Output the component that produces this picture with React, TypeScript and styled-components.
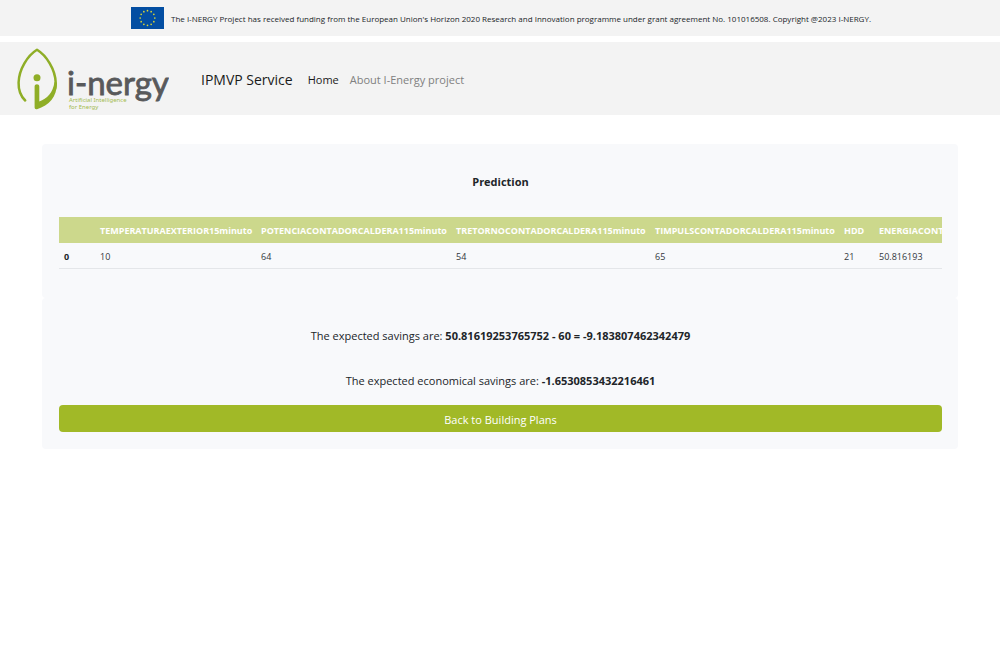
import React from "react";
import styled, { createGlobalStyle } from "styled-components";

const GlobalStyle = createGlobalStyle`
  *, *::before, *::after { box-sizing: border-box; }
  body {
    margin: 0;
    background: #fff;
    color: #212529;
    font-family: "Open Sans", "Noto Sans", sans-serif;
    font-size: 11px;
    line-height: 18px;
  }
`;

const FundingBar = styled.aside`
  display: flex;
  align-items: center;
  justify-content: center;
  gap: 7px;
  height: 36px;
  margin-bottom: 6px;
  padding-left: 2px;
  background: #f3f3f3;
  font-size: 8px;
  color: #212529;
`;

const Funding = styled.p`
  margin: 0;
  padding-top: 2px;
`;

const Navbar = styled.header`
  display: flex;
  align-items: center;
  height: 73px;
  padding: 2px 17px 0;
  background: #f3f3f3;
`;

const LogoLink = styled.a`
  display: flex;
  margin-right: 32px;
`;

const Brand = styled.a`
  margin-right: 15px;
  font-size: 14px;
  color: #1a1a1a;
  text-decoration: none;
`;

const NavLinks = styled.nav`
  display: flex;
  gap: 11px;
`;

const NavLink = styled.a<{ $active?: boolean }>`
  font-size: 11px;
  color: ${(p) => (p.$active ? "#1a1a1a" : "#808080")};
  text-decoration: none;
`;

const Main = styled.main`
  padding: 29px 42px;
`;

const Card = styled.section<{ $result?: boolean }>`
  padding: ${(p) => (p.$result ? "28px 16px 17px 17px" : "28px 16px 29px 17px")};
  border-radius: 4px;
  background: #f8f9fb;
`;

const Title = styled.h1`
  margin: 0 0 25px;
  font-size: 11px;
  line-height: 20px;
  font-weight: 700;
  text-align: center;
`;

const TableScroll = styled.div`
  overflow: hidden;
`;

const Table = styled.table`
  width: 1010px;
  table-layout: fixed;
  border-spacing: 0;
  font-size: 9px;
  line-height: 14px;
  text-align: left;
`;

const HeadCell = styled.th<{ $width?: number }>`
  width: ${(p) => (p.$width ? `${p.$width}px` : "auto")};
  padding: 7px 6px 5px;
  background: #ccd88c;
  color: #fff;
  font-weight: 700;
  white-space: nowrap;
`;

const RowHead = styled.th`
  padding: 7px 6px 4px 5px;
  border-bottom: 1px solid #e4e6e9;
`;

const Cell = styled.td`
  padding: 7px 6px 4px;
  border-bottom: 1px solid #e4e6e9;
  color: #33373b;
`;

const Result = styled.p`
  margin: 0 0 25px;
  font-size: 11px;
  line-height: 20px;
  text-align: center;

  &:last-of-type { margin-bottom: 14px; }
`;

const BackButton = styled.button`
  display: block;
  width: 100%;
  height: 27px;
  padding: 2px 0 0;
  border: 0;
  border-radius: 4px;
  background: #a1b927;
  color: #fff;
  font: inherit;
  font-size: 11px;
  cursor: pointer;
`;

const columns = [
  { name: "TEMPERATURAEXTERIOR15minuto", value: "10", width: 161 },
  { name: "POTENCIACONTADORCALDERA115minuto", value: "64", width: 195 },
  { name: "TRETORNOCONTADORCALDERA115minuto", value: "54", width: 199 },
  { name: "TIMPULSCONTADORCALDERA115minuto", value: "65", width: 189 },
  { name: "HDD", value: "21", width: 35 },
  { name: "ENERGIACONTADORCALDERA115minuto", value: "50.816193" },
];

const starAngles = Array.from({ length: 12 }, (_, i) => (i * Math.PI) / 6);

function EuFlag() {
  return (
    <svg width="33" height="22" viewBox="0 0 33 22" role="img" aria-label="European Union">
      <rect width="33" height="22" fill="#034ea2" />
      {starAngles.map((a) => (
        <circle key={a} cx={16.5 + 7.3 * Math.sin(a)} cy={11 - 7.3 * Math.cos(a)} r="0.85" fill="#d9d535" />
      ))}
    </svg>
  );
}

function Logo() {
  return (
    <svg width="152" height="64" viewBox="0 0 152 64" role="img" aria-label="i-nergy">
      <path
        d="M8.2 52.500C3.500 48 1.400 41.500 1.600 34.500C2 21.500 10.500 7.500 20 1.800C29.500 7.500 38.200 21.500 38.700 34.500C38.800 37 38.500 39 38 41"
        fill="none"
        stroke="#8fae27"
        strokeWidth="2.500"
        strokeLinecap="round"
        strokeLinejoin="round"
      />
      <path
        d="M17.600 38.500C17.600 35.500 22.300 35.500 22.300 38.500V53.500C30 50.500 36 45 37.500 34L39.900 35C40 49 32 57.500 20 61.200Q17.600 61.700 17.600 59.500Z"
        fill="#8fae27"
      />
      <circle cx="20" cy="29.700" r="3.500" fill="#8fae27" />
      <text x="50" y="47" fontFamily="Lato, sans-serif" fontSize="33" fill="#58595b" stroke="#58595b" strokeWidth="0.800">
        i-nergy
      </text>
      <text x="52" y="54" fontFamily="Noto Sans, sans-serif" fontSize="6" fill="#a3bb4e">
        Artificial Intelligence
      </text>
      <text x="52" y="61" fontFamily="Noto Sans, sans-serif" fontSize="6" fill="#a3bb4e">
        for Energy
      </text>
    </svg>
  );
}

export default function App() {
  return (
    <>
      <GlobalStyle />
      <FundingBar>
        <EuFlag />
        <Funding>
          The I-NERGY Project has received funding from the European Union's Horizon 2020 Research and Innovation
          programme under grant agreement No. 101016508. Copyright @2023 I-NERGY.
        </Funding>
      </FundingBar>
      <Navbar>
        <LogoLink href="#">
          <Logo />
        </LogoLink>
        <Brand href="#">IPMVP Service</Brand>
        <NavLinks>
          <NavLink href="#" $active>
            Home
          </NavLink>
          <NavLink href="#">About I-Energy project</NavLink>
        </NavLinks>
      </Navbar>
      <Main>
        <Card>
          <Title>Prediction</Title>
          <TableScroll>
            <Table>
              <thead>
                <tr>
                  <HeadCell $width={35} />
                  {columns.map((c) => (
                    <HeadCell key={c.name} $width={c.width} scope="col">
                      {c.name}
                    </HeadCell>
                  ))}
                </tr>
              </thead>
              <tbody>
                <tr>
                  <RowHead scope="row">0</RowHead>
                  {columns.map((c) => (
                    <Cell key={c.name}>{c.value}</Cell>
                  ))}
                </tr>
              </tbody>
            </Table>
          </TableScroll>
        </Card>
        <Card $result>
          <Result>
            The expected savings are: <strong>50.81619253765752 - 60 = -9.183807462342479</strong>
          </Result>
          <Result>
            The expected economical savings are: <strong>-1.6530853432216461</strong>
          </Result>
          <BackButton type="button">Back to Building Plans</BackButton>
        </Card>
      </Main>
    </>
  );
}
